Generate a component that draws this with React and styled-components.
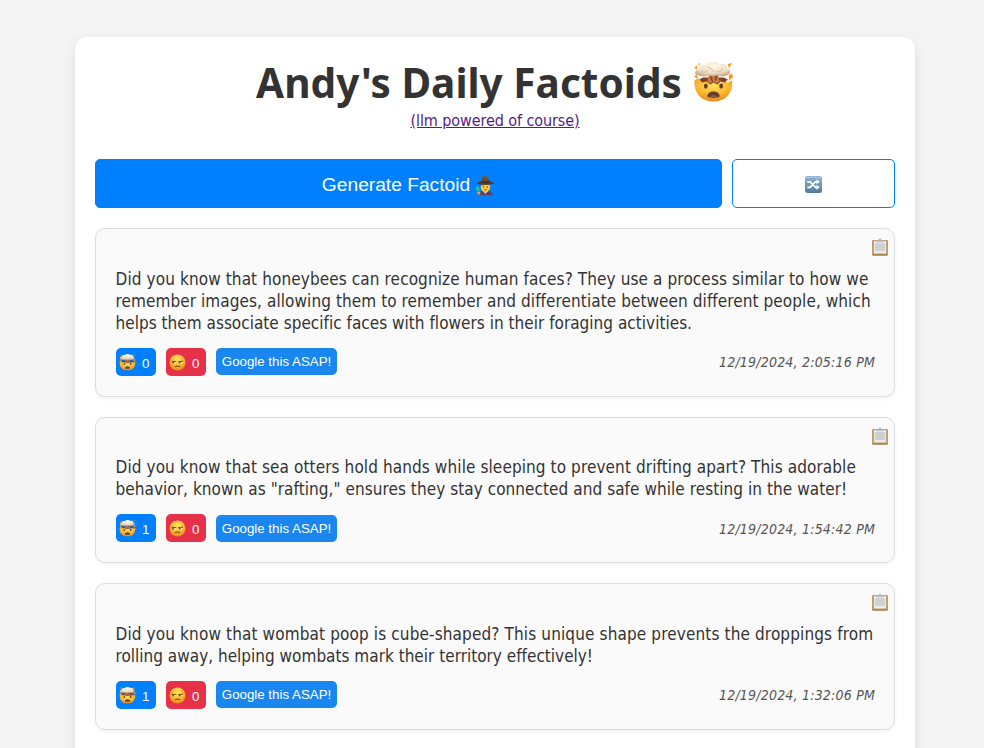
import React from 'react';
import styled, { createGlobalStyle } from 'styled-components';

const GlobalStyle = createGlobalStyle`
  * { box-sizing: border-box; }
  html, body { margin: 0; height: 748px; overflow: hidden; }
  body {
    background: #f4f4f4;
    color: #333;
    font-family: "DejaVu Sans Condensed", "DejaVu Sans", sans-serif;
    font-stretch: condensed;
  }
`;

const Page = styled.div`
  display: flex;
  justify-content: center;
  height: 748px;
  padding: 37px 69px 0 75px;
  overflow: hidden;
`;
const Container = styled.main`
  width: 840px;
  height: 900px;
  flex: none;
  padding: 20px;
  background: #fff;
  border-radius: 12px;
  box-shadow: 0 4px 12px rgba(0, 0, 0, 0.1);
`;
const Header = styled.header`
  display: flex;
  flex-direction: column;
  align-items: center;
  height: 102px;
`;
const Title = styled.h1`
  display: flex;
  align-items: center;
  justify-content: center;
  gap: 11px;
  height: 50px;
  margin: 0;
  font-family: "Noto Sans", sans-serif;
  font-size: 40.5px;
  font-stretch: normal;
  line-height: 50px;
  white-space: nowrap;
  letter-spacing: 0.03px;
`;
const TitleText = styled.span`
  padding-top: 2px;
`;
const Subtitle = styled.a`
  height: 20px;
  margin-top: 4px;
  color: #551a8b;
  font-size: 16px;
  line-height: 20px;
  letter-spacing: -0.09px;
  text-decoration: underline;
`;
const Toolbar = styled.div`
  display: flex;
  gap: 10px;
  height: 49px;
  margin-bottom: 20px;
`;
const ToolButton = styled.button`
  display: flex;
  align-items: center;
  justify-content: center;
  gap: 5px;
  width: ${p => (p.$primary ? 627 : 163)}px;
  padding: 2px 0 0;
  border: 1px solid #007fff;
  border-radius: 5px;
  background: ${p => (p.$primary ? '#007fff' : '#fff')};
  color: #fff;
  font: 19.2px "Liberation Sans", sans-serif;
`;
const Card = styled.article`
  position: relative;
  height: ${p => p.$height}px;
  margin-bottom: 20px;
  padding: ${p => p.$top}px 19px 0 19.5px;
  border: 1px solid #ddd;
  border-radius: 10px;
  background: #fafafa;
  box-shadow: 0 2px 4px rgba(0, 0, 0, 0.05);
`;
const CopyIcon = styled.span`
  position: absolute;
  top: 9px;
  right: 6px;
  display: flex;
`;
const Fact = styled.p`
  margin: 0 0 14px;
  font-size: 17px;
  line-height: 22px;
`;
const Line = styled.span`
  display: block;
  white-space: nowrap;
  letter-spacing: ${p => p.$spacing}px;
`;
const Footer = styled.div`
  display: flex;
  align-items: flex-start;
  gap: 10px;
  height: 28px;
`;
const Vote = styled.button`
  display: flex;
  align-items: center;
  gap: 6.5px;
  width: 40px;
  height: 28px;
  padding: 0 0 0 3px;
  border: 0;
  border-radius: 5px;
  background: ${p => (p.$down ? '#e63149' : '#007fff')};
  color: #fff;
  font: 13.3px "Liberation Sans", sans-serif;
`;
const Count = styled.span`
  padding-top: 3px;
`;
const Search = styled.button`
  width: 121px;
  height: 27px;
  margin-top: ${p => p.$drop}px;
  padding: 0 0 0 1px;
  border: 0;
  border-radius: 5px;
  background: #1a87f0;
  color: #fff;
  font: 13.3px "Liberation Sans", sans-serif;
  white-space: nowrap;
`;
const Stamp = styled.time`
  margin-left: auto;
  margin-top: ${p => p.$drop}px;
  color: #555;
  font-size: 14px;
  font-style: italic;
  line-height: 28px;
  letter-spacing: 0.2px;
`;
const SharedDefs = styled.svg`
  position: absolute;
`;

const Gradients = () => (
  <SharedDefs width="0" height="0" aria-hidden="true">
    <defs>
      <radialGradient id="skin" cx=".5" cy=".3" r=".75">
        <stop offset="0" stopColor="#ffe35c" /><stop offset=".55" stopColor="#fcb72f" /><stop offset="1" stopColor="#e8801b" />
      </radialGradient>
      <radialGradient id="cloud" cx=".5" cy=".3" r=".7">
        <stop offset="0" stopColor="#fff8e6" /><stop offset=".65" stopColor="#f0e0c6" /><stop offset="1" stopColor="#cba684" />
      </radialGradient>
      <linearGradient id="tile" x2="0" y2="1">
        <stop stopColor="#8eb5cf" /><stop offset="1" stopColor="#527b9b" />
      </linearGradient>
      <linearGradient id="hat" x2="0" y2="1">
        <stop stopColor="#806044" /><stop offset="1" stopColor="#483628" />
      </linearGradient>
    </defs>
  </SharedDefs>
);

const ExplodingHead = ({ size }) => (
  <svg width={size} height={size} viewBox="0 0 40 40">
    <path d="M1 6l3-3v4zM5 2l2-1-1 3zM34 2l4-1-3 5zM35 13l3-2 1 4-4 3zM1 14l3-2 1 5z" fill="#f79b20" />
    <path d="M1.300 18l3.500-2 4 3 4-1 4 3 4-1 5 1 4-3 4 2 4.500-2C39 31 31.500 38.500 20 38.500S.8 31 1.300 18z" fill="url(#skin)" />
    <path d="M6 17l4-2h20l4 2-3 3-4-1-3 3-4-2-3 2-4-3-4 1z" fill="#81401f" />
    <path d="M16 10h8l2 9-3 2-3-2-3 2-3-2z" fill="#c97745" />
    <path d="M17 14l2 5M23 13l-1 5" stroke="#68402c" strokeWidth="1.200" />
    <path d="M5 13C0 12 2 7 6 7c0-4 5-5 7-4 2-4 10-4 13-1 5-1 8 1 7 4 5 1 4 6 0 7-3 2-7 1-9 0-3 1-6 1-9 0-3 2-7 1-10 0z" fill="url(#cloud)" />
    <path d="M8 8q3 4 6 0M14 5q5 1 6 5M22 9q4 2 7-3" fill="none" stroke="#dec6a7" strokeWidth="1.100" />
    <ellipse cx="12.500" cy="23.500" rx="1.900" ry="2.600" fill="#69401d" />
    <ellipse cx="27.500" cy="23.500" rx="1.900" ry="2.600" fill="#69401d" />
    <path d="M14 34c-.3-7 12.300-7 12 0-2 1.500-10 1.500-12 0z" fill="#65402c" />
    <path d="M16 34q4-3 8 0z" fill="#966c58" />
  </svg>
);
const Unamused = () => (
  <svg width="17" height="17" viewBox="0 0 34 34">
    <circle cx="17" cy="17" r="16" fill="url(#skin)" />
    <path d="M5.500 16h9q-1 3-4 3-4 0-5-3zM18.500 16h9q-1 3-4 3-4 0-5-3z" fill="#fff0bb" />
    <path d="M5 14q5 2 9.500 1M18.500 15q5 1 9.500-1" fill="none" stroke="#704414" strokeWidth="1.900" />
    <circle cx="8.500" cy="17" r="1.800" fill="#623c16" /><circle cx="21.500" cy="17" r="1.800" fill="#623c16" />
    <path d="M12 25.500q5-3 10 0" fill="none" stroke="#704414" strokeWidth="2.200" />
  </svg>
);
const Mage = () => (
  <svg width="20" height="22" viewBox="0 0 42 44">
    <path d="M9 43q1-10 12-10t17 10z" fill="#55445b" />
    <path d="M16 34l6 7 6-7z" fill="#dac6dc" />
    <path d="M14 20q-2 8 0 12h16q2-5 0-12z" fill="#65462d" />
    <ellipse cx="22" cy="26" rx="10" ry="11" fill="#fcc53e" />
    <path d="M12 20q10-4 20 0l-2 2-8-1-9 2z" fill="#8b5728" />
    <circle cx="18" cy="26" r="1.300" fill="#583719" /><circle cx="26" cy="26" r="1.300" fill="#583719" />
    <path d="M19 32q3 1 6 0" fill="none" stroke="#a1472c" strokeWidth="1.700" />
    <path d="M3 19q5-5 10-5l4-12q3-3 8 0l5 11q8 2 10 6-18 5-37 0z" fill="url(#hat)" />
    <path d="M13 14q9 3 17-1l1 3q-9 3-19 1z" fill="#392e28" />
    <path d="M5 27l4 16" stroke="#6e4a32" strokeWidth="2" />
    <path d="M4 24l4 2 2 6-3 4-5-4z" fill="#23c889" />
    <path d="M4 37l5-2 3 5-4 3z" fill="#e7a434" />
  </svg>
);
const Shuffle = () => (
  <svg width="17" height="17" viewBox="0 0 34 34">
    <rect width="34" height="34" rx="5" fill="url(#tile)" />
    <path d="M2 4q15-4 30 0" stroke="#b3cfdf" strokeWidth="2" fill="none" />
    <path d="M4.500 11.500H10L21 22.500h4M4.500 22.500H10L21 11.500h4" fill="none" stroke="#fff" strokeWidth="3.500" />
    <path d="M23 6.500l7 5-7 5zM23 17.500l7 5-7 5z" fill="#fff" />
  </svg>
);
const Clipboard = () => (
  <svg width="16" height="18" viewBox="0 0 32 36">
    <rect x="0" y="4" width="32" height="31" rx="2" fill="#c59c6a" />
    <path d="M1 33h30v2H1z" fill="#9b6a39" />
    <path d="M4 6h24v25H4z" fill="#e8eaeb" />
    <path d="M6 10h20v16H6z" fill="#ced0d2" />
    <path d="M8 8V5h5q0-4 3-4t3 4h5v3z" fill="#b5babd" />
  </svg>
);

const facts = [
  {
    height: 169, top: 39, drop: 0, up: 0, time: '12/19/2024, 2:05:16 PM',
    lines: [
      ['Did you know that honeybees can recognize human faces? They use a process similar to how we', 0.108],
      ['remember images, allowing them to remember and differentiate between different people, which', 0.078],
      ['helps them associate specific faces with flowers in their foraging activities.', 0.022],
    ],
  },
  {
    height: 146, top: 38, drop: 1, up: 1, time: '12/19/2024, 1:54:42 PM',
    lines: [
      ['Did you know that sea otters hold hands while sleeping to prevent drifting apart? This adorable', 0.1],
      ['behavior, known as "rafting," ensures they stay connected and safe while resting in the water!', 0.06],
    ],
  },
  {
    height: 147, top: 39, drop: 0, up: 1, time: '12/19/2024, 1:32:06 PM',
    lines: [
      ['Did you know that wombat poop is cube-shaped? This unique shape prevents the droppings from', 0.13],
      ['rolling away, helping wombats mark their territory effectively!', 0.01],
    ],
  },
];

export default function App() {
  return (
    <>
      <GlobalStyle />
      <Gradients />
      <Page>
        <Container>
          <Header>
            <Title><TitleText>Andy's Daily Factoids</TitleText> <ExplodingHead size={41} /></Title>
            <Subtitle href="#">(llm powered of course)</Subtitle>
          </Header>
          <Toolbar>
            <ToolButton $primary>Generate Factoid <Mage /></ToolButton>
            <ToolButton aria-label="Shuffle"><Shuffle /></ToolButton>
          </Toolbar>
          {facts.map(fact => (
            <Card key={fact.time} $height={fact.height} $top={fact.top}>
              <CopyIcon><Clipboard /></CopyIcon>
              <Fact>
                {fact.lines.map(([text, spacing]) => <Line key={text} $spacing={spacing}>{text}</Line>)}
              </Fact>
              <Footer>
                <Vote><ExplodingHead size={17} /><Count>{fact.up}</Count></Vote>
                <Vote $down><Unamused /><Count>0</Count></Vote>
                <Search $drop={fact.drop}>Google this ASAP!</Search>
                <Stamp $drop={fact.drop}>{fact.time}</Stamp>
              </Footer>
            </Card>
          ))}
        </Container>
      </Page>
    </>
  );
}
